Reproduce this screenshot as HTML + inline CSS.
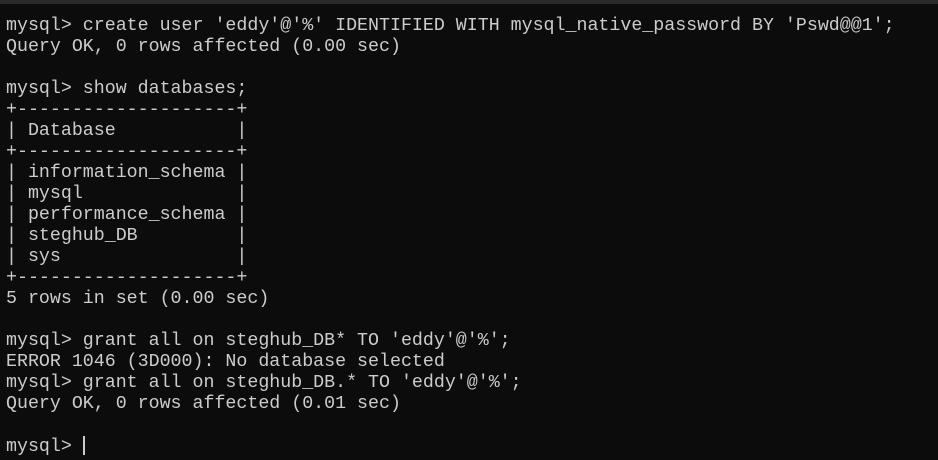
<!DOCTYPE html>
<html><head><style>
html,body{margin:0;padding:0;background:#0c0c0c;width:938px;height:460px;overflow:hidden}
.top{position:absolute;left:0;top:0;width:938px;height:4px;background:#2a2a2a}
pre{position:absolute;left:6px;top:16px;margin:0;font-family:"Liberation Mono",monospace;font-size:18.3px;line-height:21px;color:#cccccc}
.cur{display:inline-block;width:2px;height:19px;background:#cccccc;vertical-align:-4px}
</style></head><body><div class="top"></div><pre>mysql&gt; create user 'eddy'@'%' IDENTIFIED WITH mysql_native_password BY 'Pswd@@1';
Query OK, 0 rows affected (0.00 sec)

mysql&gt; show databases;
+--------------------+
| Database           |
+--------------------+
| information_schema |
| mysql              |
| performance_schema |
| steghub_DB         |
| sys                |
+--------------------+
5 rows in set (0.00 sec)

mysql&gt; grant all on steghub_DB* TO 'eddy'@'%';
ERROR 1046 (3D000): No database selected
mysql&gt; grant all on steghub_DB.* TO 'eddy'@'%';
Query OK, 0 rows affected (0.01 sec)

mysql&gt; <span class="cur"></span></pre></body></html>
